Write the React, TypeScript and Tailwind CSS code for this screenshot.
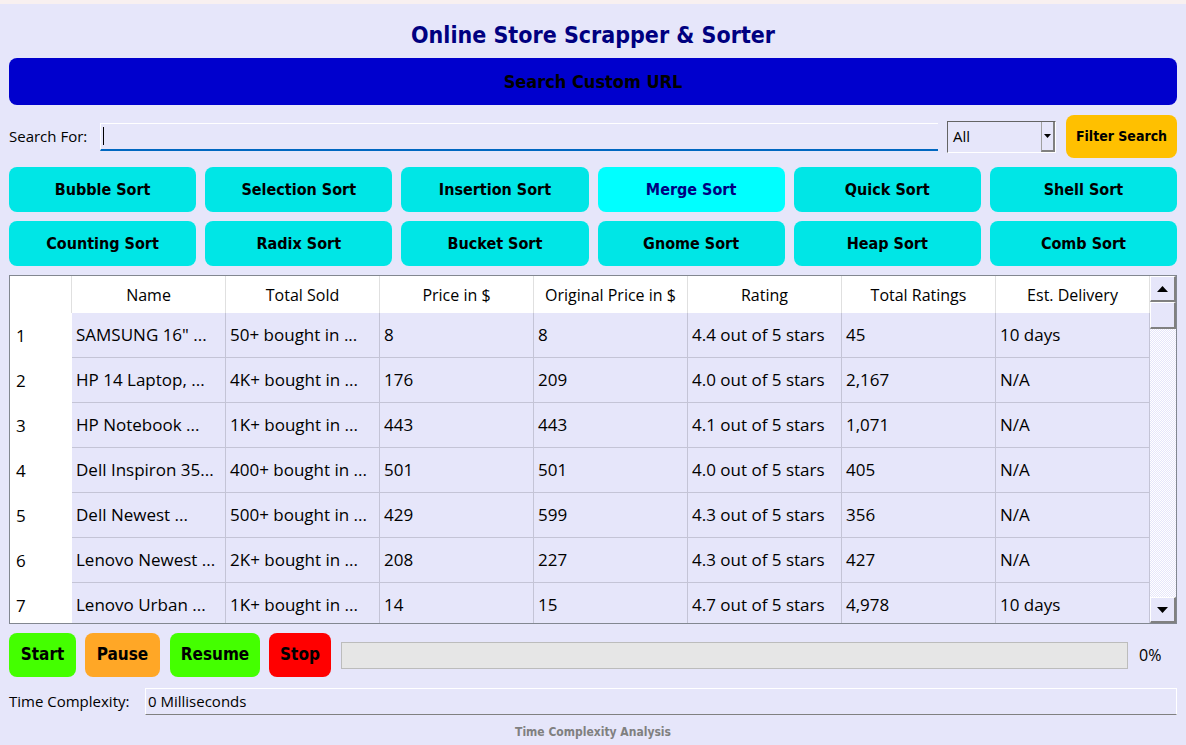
import React from "react";

const sorts1 = ["Bubble Sort", "Selection Sort", "Insertion Sort", "Merge Sort", "Quick Sort", "Shell Sort"];
const sorts2 = ["Counting Sort", "Radix Sort", "Bucket Sort", "Gnome Sort", "Heap Sort", "Comb Sort"];
const headers = ["Name", "Total Sold", "Price in $", "Original Price in $", "Rating", "Total Ratings", "Est. Delivery"];
const rows = [
  ["SAMSUNG 16\" ...", "50+ bought in ...", "8", "8", "4.4 out of 5 stars", "45", "10 days"],
  ["HP 14 Laptop, ...", "4K+ bought in ...", "176", "209", "4.0 out of 5 stars", "2,167", "N/A"],
  ["HP Notebook ...", "1K+ bought in ...", "443", "443", "4.1 out of 5 stars", "1,071", "N/A"],
  ["Dell Inspiron 35...", "400+ bought in ...", "501", "501", "4.0 out of 5 stars", "405", "N/A"],
  ["Dell Newest ...", "500+ bought in ...", "429", "599", "4.3 out of 5 stars", "356", "N/A"],
  ["Lenovo Newest ...", "2K+ bought in ...", "208", "227", "4.3 out of 5 stars", "427", "N/A"],
  ["Lenovo Urban ...", "1K+ bought in ...", "14", "15", "4.7 out of 5 stars", "4,978", "10 days"],
];

const tahoma = "font-['DejaVu_Sans_Condensed','DejaVu_Sans',sans-serif] [font-stretch:condensed]";
const segoe = "font-['Open_Sans','Noto_Sans',sans-serif]";

function SortBtn({ label, active }: { label: string; active?: boolean }) {
  return (
    <button
      className={`${tahoma} h-[45px] rounded-[8px] text-[16px] font-bold ${
        active ? "bg-[#00ffff] text-[#000080]" : "bg-[#00e6e6] text-black"
      }`}
    >
      {label}
    </button>
  );
}

export default function App() {
  return (
    <div className="w-[1186px] h-[745px] bg-[#e6e6fa] flex flex-col overflow-hidden">
      <div className="h-[4px] bg-[#f8f0f0] shrink-0" />
      <div className="px-[9px] flex flex-col">
        <h1 className={`${tahoma} text-center text-[23px] font-bold text-[#000080] h-[54px] pt-[12px] leading-[38px]`}>
          Online Store Scrapper &amp; Sorter
        </h1>
        <div className={`${tahoma} h-[47px] rounded-[8px] bg-[#0000cd] flex items-center justify-center text-[18px] font-bold text-black`}>
          Search Custom URL
        </div>
        <div className="flex items-center h-[43px] mt-[10px] mb-[9px]">
          <span className={`${segoe} text-[15px] text-black w-[91px]`}>Search For:</span>
          <div className="h-[28px] w-[838px] border-t border-l border-white border-b-2 border-b-[#0067c0] bg-[#e6e6fa] flex items-center pl-[2px]">
            <div className="w-[1px] h-[18px] bg-black" />
          </div>
          <div className="ml-[9px] h-[32px] w-[109px] border border-[#646464] border-r-white border-b-white bg-[#e6e6fa] flex items-center relative">
            <span className={`${segoe} text-[15px] pl-[5px] text-black`}>All</span>
            <div className="absolute right-0 top-0 bottom-0 w-[14px] bg-[#e6e6fa] border-l border-[#a0a0a0] border-r-2 border-r-[#808080] border-b-2 border-b-[#808080] flex items-center justify-center">
              <svg width="7" height="4" viewBox="0 0 7 4"><path d="M0 0h7L3.5 4z" fill="black" /></svg>
            </div>
          </div>
          <button className={`${tahoma} ml-[10px] h-[43px] w-[111px] rounded-[8px] bg-[#ffc000] text-[14px] font-bold text-black`}>
            Filter Search
          </button>
        </div>
        <div className="grid grid-cols-6 gap-x-[9px] gap-y-[9px]">
          {sorts1.map((s) => (
            <SortBtn key={s} label={s} active={s === "Merge Sort"} />
          ))}
          {sorts2.map((s) => (
            <SortBtn key={s} label={s} />
          ))}
        </div>
        <div className={`${segoe} mt-[9px] h-[349px] border border-[#828790] bg-white flex overflow-hidden`}>
          <div className="flex-1 flex flex-col">
            <div className="flex h-[37px] shrink-0 bg-white">
              <div className="w-[62px] border-r border-[#e0e0e0]" />
              {headers.map((h) => (
                <div key={h} className="w-[154px] border-r border-[#e0e0e0] flex items-center justify-center text-[16px] text-black">
                  {h}
                </div>
              ))}
            </div>
            {rows.map((r, i) => (
              <div key={i} className="flex h-[45px] shrink-0">
                <div className="w-[62px] bg-white flex items-center pl-[6px] text-[17px] text-black">{i + 1}</div>
                {r.map((c, j) => (
                  <div
                    key={j}
                    className="w-[154px] bg-[#e6e6fa] border-r border-b border-[#c4c4d6] flex items-center pl-[4px] text-[17px] text-black whitespace-nowrap overflow-hidden"
                  >
                    {c}
                  </div>
                ))}
              </div>
            ))}
          </div>
          <div className="w-[26px] flex flex-col bg-[repeating-conic-gradient(#e6e6fa_0_25%,#ffffff_0_50%)] bg-[length:2px_2px]">
            <div className="h-[26px] bg-[#e6e6fa] border border-white border-r-[#808080] border-b-[#808080] border-r-2 border-b-2 flex items-center justify-center">
              <svg width="11" height="6" viewBox="0 0 11 6"><path d="M0 6h11L5.5 0z" fill="black" /></svg>
            </div>
            <div className="h-[27px] bg-[#e6e6fa] border border-white border-r-[#808080] border-b-[#808080] border-r-2 border-b-2" />
            <div className="flex-1" />
            <div className="h-[26px] bg-[#e6e6fa] border border-white border-r-[#808080] border-b-[#808080] border-r-2 border-b-2 flex items-center justify-center">
              <svg width="11" height="6" viewBox="0 0 11 6"><path d="M0 0h11L5.5 6z" fill="black" /></svg>
            </div>
          </div>
        </div>
        <div className="flex items-center mt-[9px] h-[44px]">
          <button className={`${tahoma} h-[44px] w-[67px] rounded-[8px] bg-[#44ff00] text-[17px] font-bold text-black`}>Start</button>
          <button className={`${tahoma} ml-[9px] h-[44px] w-[75px] rounded-[8px] bg-[#ffa726] text-[17px] font-bold text-black`}>Pause</button>
          <button className={`${tahoma} ml-[10px] h-[44px] w-[90px] rounded-[8px] bg-[#44ff00] text-[17px] font-bold text-black`}>Resume</button>
          <button className={`${tahoma} ml-[9px] h-[44px] w-[62px] rounded-[8px] bg-[#ff0000] text-[17px] font-bold text-black`}>Stop</button>
          <div className="ml-[10px] h-[27px] w-[787px] bg-[#e6e6e6] border border-[#bcbcbc]" />
          <span className={`${segoe} ml-[11px] text-[16px] text-black`}>0%</span>
        </div>
        <div className="flex items-center mt-[11px] h-[27px]">
          <span className={`${segoe} text-[15px] text-black w-[136px]`}>Time Complexity:</span>
          <div className={`${segoe} flex-1 h-[27px] border border-white border-b-[#808080] bg-[#e6e6fa] flex items-center pl-[2px] text-[15px] text-black`}>
            0 Milliseconds
          </div>
        </div>
        <div className={`${tahoma} text-center text-[12px] font-bold text-[#808080] mt-[8px]`}>Time Complexity Analysis</div>
      </div>
    </div>
  );
}
